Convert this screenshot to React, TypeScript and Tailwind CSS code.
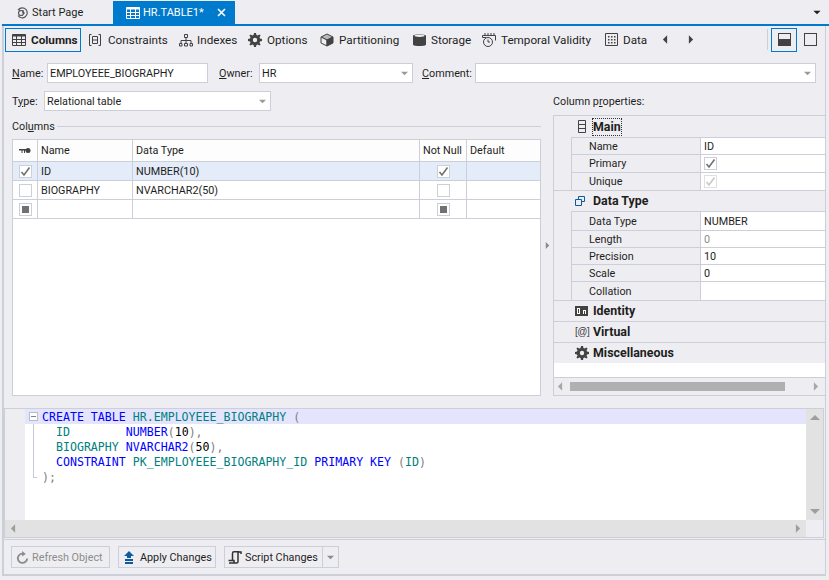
import type { ReactNode } from 'react';

function Tri({ dir, className = 'text-[#8a8a8a]', box }: { dir: 'up' | 'down' | 'left' | 'right'; className?: string; box?: string }) {
  const points = {
    up: '0,6 5,1 10,6',
    down: '0,1 10,1 5,6',
    left: '6,0 6,10 1,5',
    right: '1,0 1,10 6,5',
  }[dir];
  const vertical = dir === 'up' || dir === 'down';
  const size = box ?? (vertical ? 'w-[10px] h-[7px]' : 'w-[6px] h-[9px]');
  return (
    <svg viewBox={vertical ? '0 0 10 7' : '0 0 7 10'} className={`${size} shrink-0 ${className}`}>
      <polygon points={points} fill="currentColor" />
    </svg>
  );
}

function GridIcon() {
  return (
    <svg viewBox="0 0 14 14" className="w-[14px] h-[14px] shrink-0" fill="none" stroke="#424242">
      <path d="M.5 1.500h13v11H.5z" />
      <path d="M.5 2.500h13" strokeWidth="2" />
      <path d="M.5 6.500h13M.5 9.500h13M4.500 3v9M9.500 3v9" />
    </svg>
  );
}

function GearIcon({ size = 14 }: { size?: number }) {
  return (
    <svg viewBox="0 0 14 14" width={size} height={size} className="shrink-0">
      <path
        fill="#424242"
        d="M6 0h2l.4 2 1.300.5L11.400 1.400l1.200 1.200-1.100 1.700.5 1.300 2 .4v2l-2 .4-.5 1.300 1.100 1.700-1.200 1.200-1.700-1.100-1.300.5L8 14H6l-.4-2-1.300-.5-1.700 1.100-1.200-1.200 1.100-1.700-.5-1.300-2-.4V6l2-.4.5-1.300-1.100-1.700 1.200-1.200 1.700 1.100L5.600 2z"
      />
      <circle cx="7" cy="7" r="2.200" fill="#eeeef2" />
    </svg>
  );
}

function ToolTab({ icon, label, className }: { icon: ReactNode; label: string; className: string }) {
  return (
    <div className={`h-[24px] flex items-center border shrink-0 whitespace-nowrap ${className}`}>
      {icon}
      <span>{label}</span>
    </div>
  );
}

function TextBox({ className, value, dropdown }: { className: string; value?: string; dropdown?: boolean }) {
  return (
    <div className={`h-[20px] bg-white border border-[#ccced8] flex items-center justify-between pl-[2px] pr-[4px] ${className}`}>
      <span className="pt-px">{value}</span>
      {dropdown && <Tri dir="down" className="text-[#9a9a9a]" box="w-[7px] h-[5px]" />}
    </div>
  );
}

function Check({ state, className = '' }: { state?: 'checked' | 'mixed' | 'faded'; className?: string }) {
  return (
    <div className={`w-[13px] h-[13px] bg-white border border-[#ccced8] flex items-center justify-center ${className}`}>
      {state === 'mixed' && <div className="w-[7px] h-[7px] bg-[#717171]" />}
      {(state === 'checked' || state === 'faded') && (
        <svg viewBox="0 0 11 11" className="w-[11px] h-[11px]" fill="none" stroke={state === 'faded' ? '#c8c8c8' : '#717171'} strokeWidth="1.600">
          <path d="M1.500 6l2.500 3 5.500-7.500" />
        </svg>
      )}
    </div>
  );
}

const columnGrid = 'grid grid-cols-[25px_95px_287px_47px_1fr] border-b border-[#ccced8]';

function ColumnRow({ name, type, state, selected }: { name?: string; type?: string; state?: 'checked' | 'mixed'; selected?: boolean }) {
  const cell = 'border-r border-[#ccced8] flex items-center';
  return (
    <div className={`${columnGrid} h-[19px] ${selected ? 'bg-[#e3ecf8]' : 'bg-white'}`}>
      <div className={`${cell} justify-center`}><Check state={state} /></div>
      <div className={`${cell} pl-[3px] pt-px`}>{name}</div>
      <div className={`${cell} pl-[3px] pt-px`}>{type}</div>
      <div className={`${cell} justify-center`}><Check state={state} /></div>
      <div />
    </div>
  );
}

function PropRow({ label, value, h = 'h-[17px]', children }: { label: string; value?: string; h?: string; children?: ReactNode }) {
  return (
    <div className={`${h} ml-[17px] grid grid-cols-[129px_1fr] border-l border-t border-[#ccced8]`}>
      <div className="pl-[17px] pt-px flex items-center border-r border-[#ccced8]">{label}</div>
      <div className="bg-white pl-[3px] flex items-center">
        {value && <span className="pt-px">{value}</span>}
        {children}
      </div>
    </div>
  );
}

function Category({ icon, label, dotted }: { icon: ReactNode; label: string; dotted?: boolean }) {
  return (
    <div className="h-[21px] border-t border-[#ccced8] first:border-t-0 flex items-center">
      <div className="w-[39px] pl-[21px] flex items-center shrink-0">{icon}</div>
      <span className={`font-bold text-[12.400px] ${dotted ? 'outline-1 outline-dotted outline-[#333]' : ''}`}>{label}</span>
    </div>
  );
}

function FootButton({ icon, label, dim, className }: { icon: ReactNode; label: string; dim?: boolean; className: string }) {
  return (
    <div className={`h-[22px] border border-[#ccced8] flex items-center pl-[4px] ${dim ? 'text-[#8c8c8c]' : ''} ${className}`}>
      {icon}
      <span className="pt-px">{label}</span>
    </div>
  );
}

function K({ children }: { children: ReactNode }) {
  return <span className="text-[#0000ff]">{children}</span>;
}
function I({ children }: { children: ReactNode }) {
  return <span className="text-[#008080]">{children}</span>;
}
function P({ children }: { children: ReactNode }) {
  return <span className="text-[#808080]">{children}</span>;
}

function SqlLine({ fold, children, active }: { fold: 'open' | 'line' | 'end'; children: ReactNode; active?: boolean }) {
  return (
    <div className={`h-[15px] flex ${active ? 'bg-[#e4e4fc]' : ''}`}>
      <div className="w-[17px] shrink-0 pl-[4px] flex">
        {fold === 'open' && (
          <div className="mt-[3px] w-[9px] h-[9px] border border-[#b8bcd0] bg-white flex items-center justify-center">
            <div className="w-[5px] h-px bg-[#808080]" />
          </div>
        )}
        {fold === 'line' && <div className="ml-[4px] w-px h-full bg-[#c8c8d8]" />}
        {fold === 'end' && <div className="ml-[4px] w-[4px] h-[9px] border-l border-b border-[#c8c8d8]" />}
      </div>
      <div className="pt-px leading-[15px] whitespace-pre">{children}</div>
    </div>
  );
}

export default function App() {
  return (
    <div className="w-[829px] h-[580px] overflow-hidden bg-[#eeeef2] text-[10.800px] leading-[16px] text-[#1e1e1e] font-['Roboto',sans-serif]">
      {/* document tabs */}
      <div className="h-[24px] flex items-end text-[11px]">
        <div className="w-[113px] h-[23px] flex items-center pl-[16px] gap-[3px]">
          <svg viewBox="0 0 13 13" className="w-[13px] h-[13px]" fill="none" stroke="#555" strokeWidth="1.200">
            <path d="M2.500 3.500a5 5 0 1 1-.5 6M4.500 2l-2 1.500 2 1.500" />
            <path d="M7 4v3h2" />
            <circle cx="5" cy="7" r="2.500" />
          </svg>
          <span>Start Page</span>
        </div>
        <div className="w-[122px] h-[23px] bg-[#007acc] text-white flex items-center pl-[13px]">
          <svg viewBox="0 0 14 14" className="w-[14px] h-[14px] shrink-0" fill="none" stroke="#fff">
            <path d="M.5 1.500h13v11H.5z" />
            <path d="M.5 2.500h13" strokeWidth="2" />
            <path d="M.5 6.500h13M.5 9.500h13M4.500 3v9M9.500 3v9" />
          </svg>
          <span className="ml-[3px]">HR.TABLE1*</span>
          <svg viewBox="0 0 9 9" className="w-[9px] h-[9px] ml-auto mr-[9px]" stroke="#fff" strokeWidth="1.600">
            <path d="M1 1l7 7M8 1l-7 7" />
          </svg>
        </div>
        <div className="flex-1 h-[23px] flex items-center justify-end pr-[8px]">
          <Tri dir="down" className="text-[#1e1e1e]" box="w-[8px] h-[5px]" />
        </div>
      </div>
      <div className="h-[2px] ml-[2px] bg-[#007acc]" />

      <div className="ml-[2px] w-[824px] h-[550px] border-l-2 border-r border-b-2 border-[#ccced8] flex flex-col">
        {/* designer toolbar */}
        <div className="h-[27px] flex items-center pl-[1px] pr-px text-[11.700px]">
          <ToolTab
            className="w-[76px] mr-[2px] gap-[5px] pl-[6px] border-[#007acc] font-bold"
            label="Columns"
            icon={<GridIcon />}
          />
          <ToolTab
            className="w-[90px] gap-[7px] pl-[5px] border-transparent"
            label="Constraints"
            icon={
              <svg viewBox="0 0 12 14" className="w-[12px] h-[14px]" fill="none" stroke="#424242">
                <path d="M2.500 1.500h-2v11h2M9.500 1.500h2v11h-2M3.500 3.500h5v7h-5zM3.500 7h5" />
              </svg>
            }
          />
          <ToolTab
            className="w-[69px] gap-[4px] pl-[5px] border-transparent"
            label="Indexes"
            icon={
              <svg viewBox="0 0 14 14" className="w-[14px] h-[14px]" fill="none" stroke="#424242">
                <path d="M5.500 1.500h3v3h-3zM7 4.500v3M2 10V7.500h10V10M7 7.500V10" />
                <path d="M.5 10.500h2.500v2.500H.5zM5.500 10.500h3v2.500h-3zM11 10.500h2.500v2.500H11z" />
              </svg>
            }
          />
          <ToolTab className="w-[72px] gap-[5px] pl-[5px] border-transparent" label="Options" icon={<GearIcon />} />
          <ToolTab
            className="w-[93px] gap-[5px] pl-[5px] border-transparent"
            label="Partitioning"
            icon={
              <svg viewBox="0 0 14 14" className="w-[14px] h-[14px]">
                <path d="M1 4l6-3 6 3-6 3z" fill="#b9b9b9" stroke="#424242" />
                <path d="M1 4v6l6 3V7z" fill="#eeeef2" stroke="#424242" />
                <path d="M13 4v6l-6 3V7z" fill="#424242" stroke="#424242" />
              </svg>
            }
          />
          <ToolTab
            className="w-[69px] gap-[5px] pl-[5px] border-transparent"
            label="Storage"
            icon={
              <svg viewBox="0 0 13 14" className="w-[13px] h-[14px]">
                <path d="M0 2.500C0 1 13 1 13 2.500v9C13 13.500 0 13.500 0 11.500z" fill="#424242" />
                <ellipse cx="6.500" cy="2.800" rx="5" ry="1.100" fill="#eeeef2" />
              </svg>
            }
          />
          <ToolTab
            className="w-[123px] gap-[5px] pl-[5px] border-transparent"
            label="Temporal Validity"
            icon={
              <svg viewBox="0 0 14 14" className="w-[14px] h-[14px]" fill="none" stroke="#424242">
                <path d="M4 4.500H.5v-2h13v5M3 0v3M6 0v3M9 0v3M12 0v3" />
                <circle cx="6" cy="9" r="4.500" />
                <path d="M6 6.500V9h2" />
              </svg>
            }
          />
          <ToolTab
            className="w-[54px] gap-[5px] pl-[5px] border-transparent"
            label="Data"
            icon={
              <svg viewBox="0 0 13 13" className="w-[13px] h-[13px]" fill="none" stroke="#424242">
                <path d="M.5.500h12v12H.5z" />
                <path d="M3 3h1.500v1.500H3zM6 3h1.500v1.500H6zM9 3h1.500v1.500H9zM3 6h1.500v1.500H3zM6 6h1.500v1.500H6zM9 6h1.500v1.500H9zM3 9h1.500v1.500H3zM6 9h1.500v1.500H6zM9 9h1.500v1.500H9z" fill="#424242" stroke="none" />
              </svg>
            }
          />
          <div className="ml-[9px] flex items-center gap-[20px]">
            <Tri dir="left" className="text-[#424242]" />
            <Tri dir="right" className="text-[#424242]" />
          </div>
          <div className="ml-auto flex items-center">
            <div className="w-px h-[21px] bg-[#ccced8] mr-[3px]" />
            <div className="w-[26px] h-[24px] border border-[#007acc] flex items-center justify-center">
              <div className="w-[13px] h-[13px] border border-[#424242] flex flex-col justify-end">
                <div className="h-[6px] bg-[#424242]" />
              </div>
            </div>
            <div className="w-[27px] h-[24px] flex items-center justify-center">
              <div className="w-[13px] h-[13px] border border-[#424242]" />
            </div>
          </div>
        </div>

        {/* name, owner, comment */}
        <div className="mt-[10px] h-[20px] flex items-center pl-[8px] pr-[9px]">
          <span className="w-[35px] pt-px"><u>N</u>ame:</span>
          <TextBox className="w-[161px]" value="EMPLOYEEE_BIOGRAPHY" />
          <span className="ml-[11px] w-[40px] pt-px"><u>O</u>wner:</span>
          <TextBox className="w-[154px]" value="HR" dropdown />
          <span className="ml-[9px] w-[53px] pt-px"><u>C</u>omment:</span>
          <TextBox className="flex-1" dropdown />
        </div>

        <div className="mt-[8px] h-[305px] flex">
          {/* columns pane */}
          <div className="w-[537px] pl-[8px] flex flex-col shrink-0">
            <div className="h-[20px] flex items-center">
              <span className="w-[32px] pt-px">T<u>y</u>pe:</span>
              <TextBox className="w-[227px]" value="Relational table" dropdown />
            </div>
            <div className="mt-[7px] h-[16px] flex items-center gap-[2px]">
              <span className="pt-px">Col<u>u</u>mns</span>
              <div className="flex-1 h-px bg-[#ccced8]" />
            </div>
            <div className="mt-[5px] h-[257px] border border-[#ccced8] bg-white">
              <div className={`${columnGrid} h-[22px] bg-[#fdfdfd]`}>
                <div className="border-r border-[#ccced8] flex items-center justify-center">
                  <svg viewBox="0 0 12 6" className="w-[12px] h-[6px]" fill="#424242">
                    <path d="M0 1h7v1.500H6V5H5V2.500H3.500V5h-1V2.500H0z" />
                    <circle cx="9" cy="2.500" r="2.500" />
                  </svg>
                </div>
                <div className="border-r border-[#ccced8] pl-[3px] flex items-center">Name</div>
                <div className="border-r border-[#ccced8] pl-[3px] flex items-center">Data Type</div>
                <div className="border-r border-[#ccced8] pl-[3px] flex items-center whitespace-nowrap">Not Null</div>
                <div className="pl-[3px] flex items-center">Default</div>
              </div>
              <ColumnRow selected name="ID" type="NUMBER(10)" state="checked" />
              <ColumnRow name="BIOGRAPHY" type="NVARCHAR2(50)" />
              <ColumnRow state="mixed" />
            </div>
          </div>

          {/* splitter */}
          <div className="w-[12px] shrink-0 flex items-center justify-center pt-[4px]">
            <Tri dir="right" className="text-[#8a8a8a]" box="w-[5px] h-[7px]" />
          </div>

          {/* property grid */}
          <div className="flex-1 flex flex-col min-w-0">
            <div className="h-[24px] pt-[3px]">Column p<u>r</u>operties:</div>
            <div className="h-[281px] border-t border-l border-b border-[#ccced8] flex flex-col">
              <Category
                dotted
                label="Main"
                icon={
                  <svg viewBox="0 0 8 13" className="w-[8px] h-[13px] ml-[3px]" fill="none" stroke="#424242">
                    <path d="M.5.500h7v12h-7zM.5 4.500h7M.5 8.500h7" />
                  </svg>
                }
              />
              <PropRow label="Name" value="ID" />
              <PropRow label="Primary" h="h-[18px]"><Check state="checked" /></PropRow>
              <PropRow label="Unique" h="h-[18px]"><Check state="faded" className="border-[#e0e0e0]" /></PropRow>
              <Category
                label="Data Type"
                icon={
                  <svg viewBox="0 0 10 10" className="w-[10px] h-[10px]" fill="none" stroke="#0e5a9c">
                    <path d="M3.500 3V.500h6v5H7M.5 3.500h6v6h-6z" />
                  </svg>
                }
              />
              <PropRow label="Data Type" value="NUMBER" h="h-[19px]" />
              <PropRow label="Length"><span className="pt-px text-[#8c8c8c]">0</span></PropRow>
              <PropRow label="Precision" value="10" />
              <PropRow label="Scale" value="0" />
              <PropRow label="Collation" h="h-[19px]" />
              <Category
                label="Identity"
                icon={
                  <svg viewBox="0 0 13 10" className="w-[13px] h-[10px]">
                    <rect width="13" height="10" fill="#424242" />
                    <path d="M2 2h3v6H2zM3 3v4h1V3zM8 4h3v4h-1V5H9v3H8z" fill="#fff" fillRule="evenodd" />
                  </svg>
                }
              />
              <Category label="Virtual" icon={<span className="text-[10px] leading-[10px] text-[#424242] tracking-[-0.5px] font-['Liberation_Sans',sans-serif]">[@]</span>} />
              <Category label="Miscellaneous" icon={<GearIcon size={14} />} />
              <div className="flex-1 bg-white" />
              <div className="h-[18px] flex items-center border-t border-[#ccced8] bg-[#eeeef2]">
                <Tri dir="left" className="ml-[3px] text-[#a8a8a8]" />
                <div className="ml-[7px] w-[215px] h-[9px] bg-[#b0b0b0]" />
                <div className="flex-1" />
                <Tri dir="right" className="mr-[6px] text-[#a8a8a8]" />
              </div>
            </div>
          </div>
        </div>

        {/* sql preview */}
        <div className="mt-[12px] mr-px h-[130px] border border-[#ccced8] flex flex-col">
          <div className="flex-1 flex min-h-0">
            <div className="w-[20px] shrink-0" />
            <div className="flex-1 bg-white min-w-0 font-['DejaVu_Sans_Mono',monospace] text-[11.600px]">
              <SqlLine active fold="open"><K>CREATE TABLE</K> <I>HR.EMPLOYEEE_BIOGRAPHY</I> <P>(</P></SqlLine>
              <SqlLine fold="line">  <I>ID</I>        <K>NUMBER</K><P>(</P><span className="text-black">10</span><P>),</P></SqlLine>
              <SqlLine fold="line">  <I>BIOGRAPHY</I> <K>NVARCHAR2</K><P>(</P><span className="text-black">50</span><P>),</P></SqlLine>
              <SqlLine fold="line">  <K>CONSTRAINT</K> <I>PK_EMPLOYEEE_BIOGRAPHY_ID</I> <K>PRIMARY KEY</K> <P>(</P><I>ID</I><P>)</P></SqlLine>
              <SqlLine fold="end"><P>);</P></SqlLine>
            </div>
            <div className="w-[17px] shrink-0 bg-[#e2e2e2] flex flex-col items-center justify-between py-[5px]">
              <Tri dir="up" className="text-[#9e9e9e]" />
              <Tri dir="down" className="text-[#9e9e9e]" />
            </div>
          </div>
          <div className="h-[17px] flex">
            <div className="flex-1 bg-[#e2e2e2] flex items-center justify-between px-[5px]">
              <Tri dir="left" className="text-[#9e9e9e]" />
              <Tri dir="right" className="text-[#9e9e9e]" />
            </div>
            <div className="w-[17px]" />
          </div>
        </div>

        {/* footer buttons */}
        <div className="flex-1 mt-px border-t border-[#ccced8] flex items-center pl-[7px] gap-[8px]">
          <FootButton
            dim
            className="w-[99px] gap-[3px]"
            label="Refresh Object"
            icon={
              <svg viewBox="0 0 14 14" className="w-[13px] h-[13px]" fill="none" stroke="#8c8c8c" strokeWidth="2">
                <path d="M9 3.200a5 5 0 1 0 3 4.800" />
                <path d="M6.500 0l4 3.200-4 2.800z" fill="#8c8c8c" stroke="none" />
              </svg>
            }
          />
          <FootButton
            className="w-[98px] gap-[5px]"
            label="Apply Changes"
            icon={
              <svg viewBox="0 0 10 13" className="w-[10px] h-[13px] mx-[1px]" fill="#0e5a9c">
                <path d="M5 0l5 5H7v2H3V5H0zM1 8h8v2H1zM1 11h8v2H1z" />
              </svg>
            }
          />
          <div className="h-[22px] w-[115px] border border-[#ccced8] flex items-center">
            <div className="h-full w-[98px] flex items-center gap-[3px] pl-[3px] border-r border-[#ccced8]">
              <svg viewBox="0 0 14 13" className="w-[14px] h-[13px]" fill="none" stroke="#333" strokeWidth="1.500">
                <path d="M1 12h7.500c1 0 1.500-.5 1.500-1.500V2c0-.8.5-1.200 1.200-1.200H6C5 .8 4.500 1.500 4.500 2.500v7" />
                <path d="M.5 9.500h5.500V12M10.500 1H13v2" />
              </svg>
              <span className="pt-px">Script Changes</span>
            </div>
            <div className="flex-1 flex justify-center">
              <Tri dir="down" className="text-[#8a8a8a]" box="w-[7px] h-[5px]" />
            </div>
          </div>
        </div>
      </div>
    </div>
  );
}
